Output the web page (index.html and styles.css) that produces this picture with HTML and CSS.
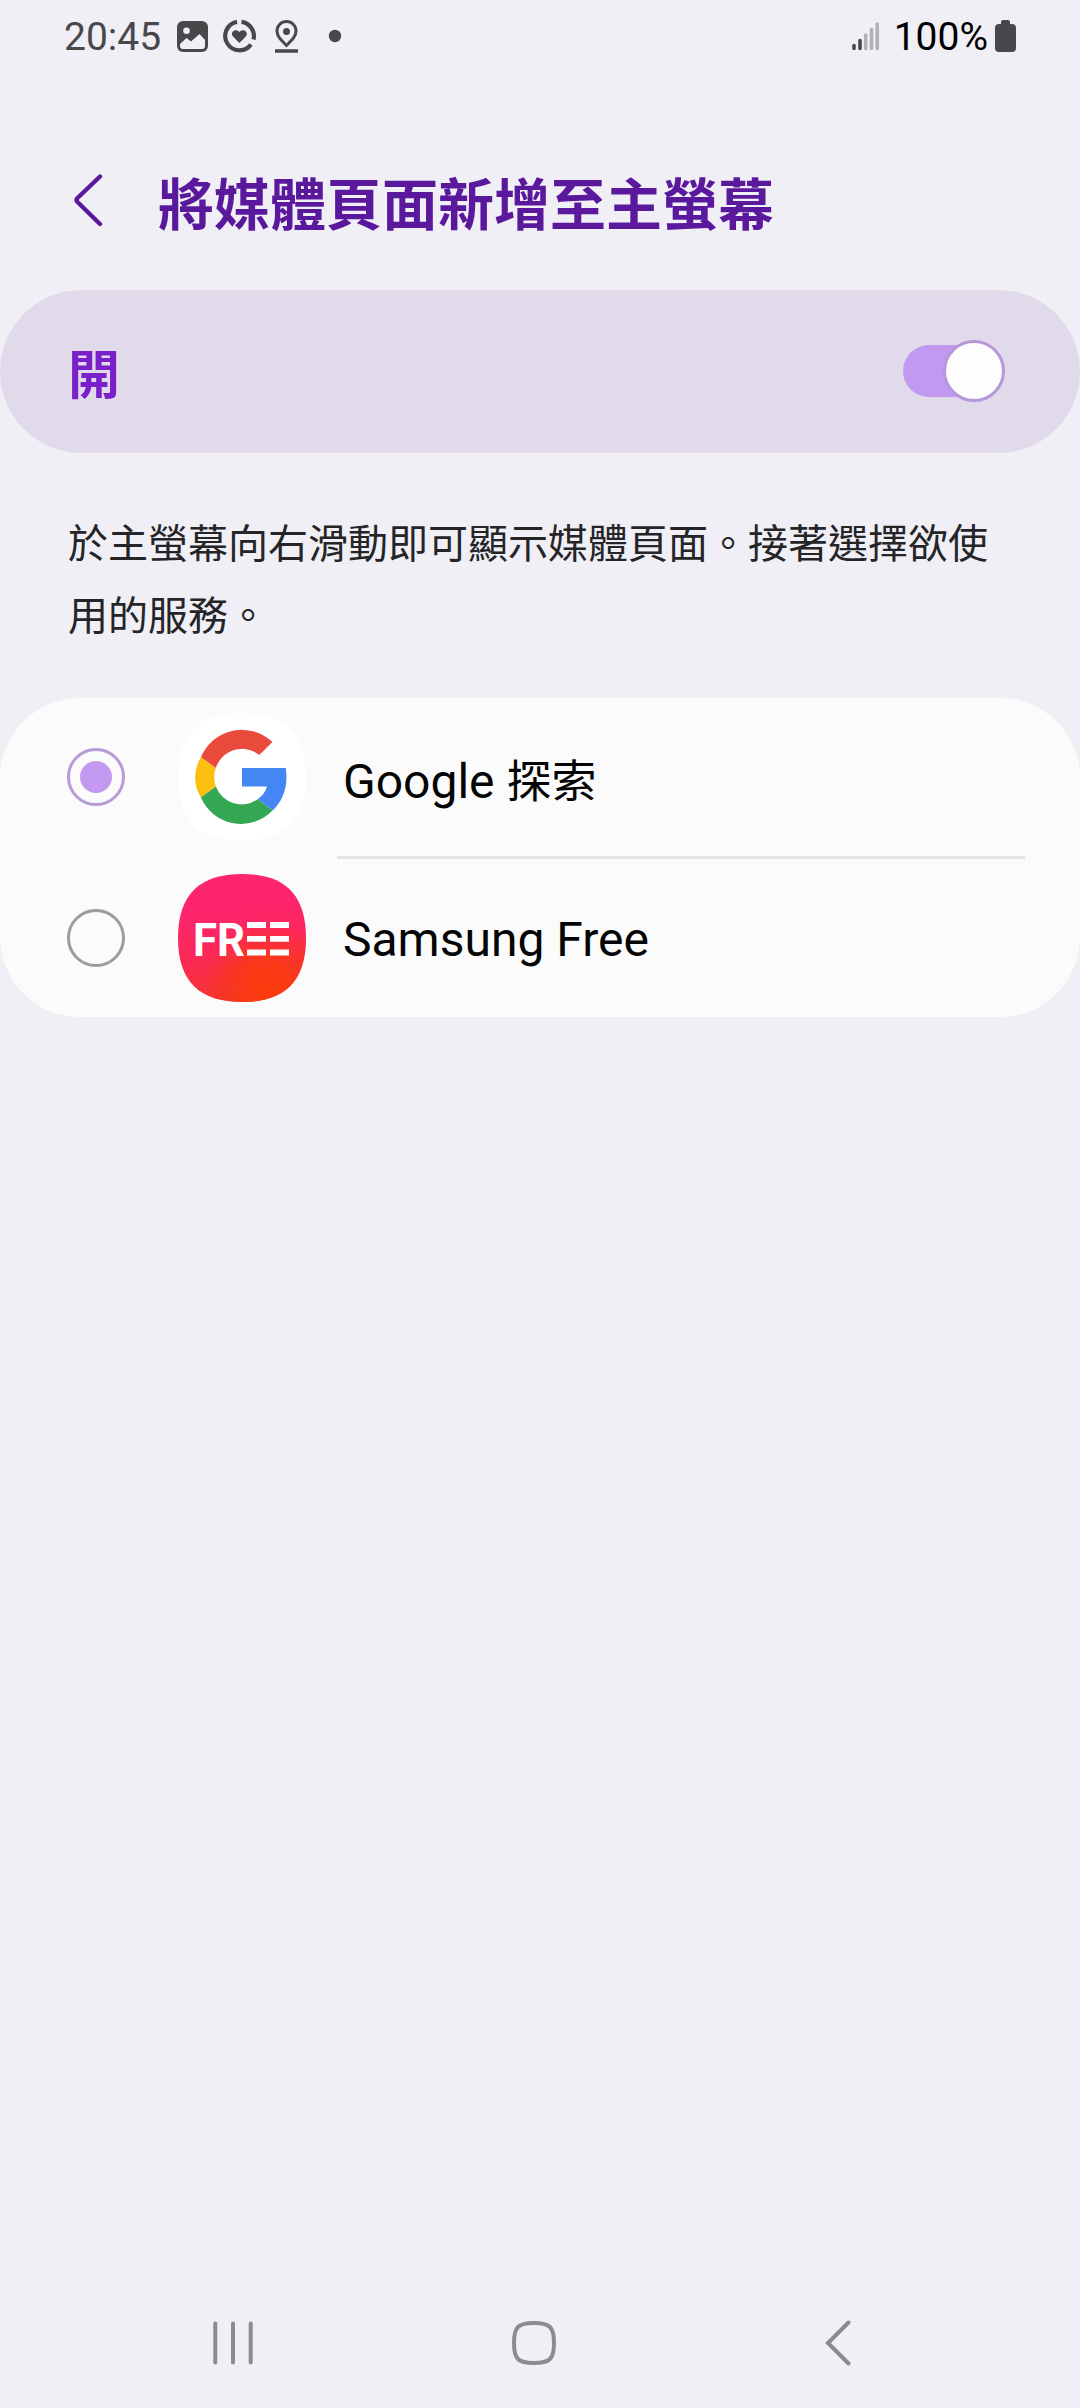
FILE: index.html
```html
<!DOCTYPE html>
<html lang="zh-Hant">
<head>
<meta charset="utf-8">
<title>將媒體頁面新增至主螢幕</title>
<link rel="stylesheet" href="styles.css">
</head>
<body>
<div class="screen">
  <div class="status">
    <span class="clock">20:45</span>
    <svg class="st-icons" width="166" height="36" viewBox="0 0 166 36" fill="none">
      <rect x="1" y="3" width="31" height="31" rx="6" fill="#48484b"/>
      <circle cx="10.500" cy="12.700" r="3.300" fill="#f0eff5"/>
      <path d="M4 26L10.500 20L15 23.500L23.500 16L29 22V28Q29 31 26 31H7Q4 31 4 28Z" fill="#f0eff5"/>
      <g stroke="#48484b" stroke-width="4.200">
        <path d="M61 3.900A14.300 14.300 0 1 0 75 26.500"/>
        <path d="M65.500 3.900A14.300 14.300 0 0 1 77.500 21.500"/>
      </g>
      <path d="M63.400 25L57 18.500C53.500 14 59.500 9.500 63.400 14C67.300 9.500 73.300 14 69.800 18.500Z" fill="#48484b"/>
      <path d="M110.500 27.500C105 22 101 18.500 101 13A9.500 9.500 0 0 1 120 13C120 18.500 116 22 110.500 27.500Z" stroke="#48484b" stroke-width="3"/>
      <circle cx="110.500" cy="13.500" r="3.500" fill="#48484b"/>
      <path d="M99 33H122" stroke="#48484b" stroke-width="3.500"/>
      <circle cx="159" cy="18" r="6.200" fill="#48484b"/>
    </svg>
    <svg class="signal" width="28" height="32" viewBox="0 0 28 32" stroke-width="3.600" stroke-linecap="round">
      <path d="M2 25.500V28.500M8 20.500V28.500" stroke="#48484b"/>
      <path d="M13.700 15V28.500M19.500 9.500V28.500M25.200 4V28.500" stroke="#b2b1b5"/>
    </svg>
    <span class="percent">100%</span>
    <svg width="21" height="32" viewBox="0 0 21 32"><path d="M6 4V2Q6 0 8 0H13Q15 0 15 2V4H17Q21 4 21 8V28Q21 32 17 32H4Q0 32 0 28V8Q0 4 4 4Z" fill="#48484b"/></svg>
  </div>
  <header class="header">
    <svg width="30" height="56" viewBox="0 0 30 56" fill="none"><path d="M26 4.500L3.500 26Q1.500 28 3.500 30L26 52" stroke="#5a189c" stroke-width="4.300" stroke-linecap="round" stroke-linejoin="round"/></svg>
    <h1>將媒體頁面新增至主螢幕</h1>
  </header>
  <section class="master">
    <span class="master-label">開</span>
    <span class="switch"><span class="track"></span><span class="thumb"></span></span>
  </section>
  <p class="desc">於主螢幕向右滑動即可顯示媒體頁面。接著選擇欲使用的服務。</p>
  <section class="card">
    <div class="row">
      <span class="radio on"></span>
      <svg class="app" width="128" height="128" viewBox="0 0 128 128">
        <path d="M64 0C106 0 128 20 128 64S106 128 64 128S0 108 0 64S22 0 64 0Z" fill="#fff"/>
        <g transform="translate(17 17)">
          <path d="M5.900 27.200A44.500 44.500 0 0 1 77.500 12L64.300 25A27.500 27.500 0 0 0 20.800 38Z" fill="#ea4a3c"/>
          <path d="M5.900 27.200A38 38 0 0 0 5.900 67.500L20.800 56.500A28 28 0 0 1 20.800 38Z" fill="#fbbf0f"/>
          <path d="M5.900 67.500A43.700 43.700 0 0 0 77.500 80.500L63 69A27.500 27.500 0 0 1 20.800 56.500Z" fill="#34a753"/>
          <path d="M47 38H90.800C93.500 56 88 71 77.500 80.500L63 69Q70 64 72 56.500H47Z" fill="#4486f3"/>
        </g>
      </svg>
      <span class="name discover">Google <span class="han">探索</span></span>
    </div>
    <div class="divider"></div>
    <div class="row">
      <span class="radio"></span>
      <svg class="app" width="128" height="128" viewBox="0 0 128 128">
        <defs>
          <linearGradient id="pink" x1=".45" y1="0" x2=".6" y2="1"><stop offset=".2" stop-color="#fd2570"/><stop offset=".55" stop-color="#fb2859"/><stop offset="1" stop-color="#f4362c"/></linearGradient>
          <radialGradient id="glow" cx=".7" cy=".87" r=".5"><stop offset="0" stop-color="#fa3b0c"/><stop offset=".35" stop-color="#fa3b0c" stop-opacity=".8"/><stop offset="1" stop-color="#fa3b0c" stop-opacity="0"/></radialGradient>
        </defs>
        <path d="M64 0C106 0 128 20 128 64S106 128 64 128S0 108 0 64S22 0 64 0Z" fill="url(#pink)"/>
        <path d="M64 0C106 0 128 20 128 64S106 128 64 128S0 108 0 64S22 0 64 0Z" fill="url(#glow)"/>
        <text x="15" y="81.500" class="logo" textLength="52" lengthAdjust="spacingAndGlyphs">FR</text>
        <path d="M69 51H88M69 64.800H88M69 78.500H88M92 51H111M92 64.800H111M92 78.500H111" stroke="#fff" stroke-width="5.800"/>
      </svg>
      <span class="name">Samsung Free</span>
    </div>
  </section>
  <nav class="nav">
    <svg width="40" height="44" viewBox="0 0 40 44" stroke="#8c8c90" stroke-width="4" stroke-linecap="round"><path d="M2.300 2.500V41.500M20 2.500V41.500M37.700 2.500V41.500"/></svg>
    <svg class="home" width="44" height="44" viewBox="0 0 44 44" fill="none"><path d="M22 2C38 2 42 6 42 22S38 42 22 42S2 38 2 22S6 2 22 2Z" stroke="#8c8c90" stroke-width="4"/></svg>
    <svg width="26" height="46" viewBox="0 0 26 46" fill="none"><path d="M23.500 2.500L3 23L23.500 43.500" stroke="#8c8c90" stroke-width="4" stroke-linecap="round"/></svg>
  </nav>
</div>
</body>
</html>
```
FILE: styles.css
```css
* { box-sizing: border-box; }
body {
  margin: 0;
  background: #f0eff5;
  font-family: Roboto, "Noto Sans CJK TC", sans-serif;
}
svg { display: block; flex: none; }
.screen {
  display: flex;
  flex-direction: column;
  width: 1080px;
  height: 2408px;
}
.status {
  display: flex;
  align-items: center;
  height: 72px;
  padding: 0 64px 0 64px;
  font-size: 39px;
  line-height: 46px;
}
.clock { width: 112px; color: #48484b; white-space: nowrap; }
.clock, .percent { padding-top: 1px; }
.signal { margin-left: auto; }
.percent { margin: 0 7px 0 14px; color: #000; }
.header {
  display: flex;
  align-items: flex-start;
  height: 218px;
  padding: 92px 0 0 74px;
  gap: 54px;
}
.header svg { margin-top: 8px; }
.header h1 {
  margin: 2px 0 0;
  color: #5a189c;
  font-size: 56px;
  line-height: 80px;
  font-weight: 700;
}
.master {
  display: flex;
  align-items: center;
  justify-content: space-between;
  height: 163px;
  padding: 0 75px 0 68px;
  border-radius: 82px;
  background: #e1daeb;
}
.master-label {
  color: #7920cb;
  font-size: 52px;
  line-height: 76px;
  font-weight: 700;
  padding-top: 10px;
}
.switch { display: grid; align-items: center; width: 102px; height: 62px; margin-bottom: 1px; }
.switch > * { grid-area: 1 / 1; }
.track { width: 84px; height: 52px; border-radius: 26px; background: #c299f0; }
.thumb {
  justify-self: end;
  width: 62px;
  height: 62px;
  border: 3px solid #b697d9;
  border-radius: 50%;
  background: #fdfdfd;
}
.desc {
  margin: 0;
  height: 245px;
  padding: 56px 70px 0 68px;
  color: #252528;
  font-size: 40px;
  line-height: 72px;
}
.card {
  height: 319px;
  border-radius: 80px;
  background: #fbfbfb;
}
.row { display: flex; align-items: center; height: 158px; padding-left: 67px; }
.radio {
  display: grid;
  place-items: center;
  width: 58px;
  height: 58px;
  border: 3px solid #9c9c9c;
  border-radius: 50%;
}
.radio.on { border-color: #b69bd6; }
.radio.on::after {
  content: "";
  width: 32px;
  height: 32px;
  border-radius: 50%;
  background: #c299f0;
}
.app { margin-left: 53px; }
.name { margin-left: 37px; padding-top: 3px; color: #050505; font-size: 48px; line-height: 60px; white-space: nowrap; }
.discover { padding-top: 11px; }
.han { font-size: 45px; }
.divider { height: 3px; margin: 0 55px 0 337px; background: #e5e5e6; }
.logo { font: 700 46px Roboto, sans-serif; fill: #fff; }
.nav {
  display: flex;
  align-items: center;
  justify-content: space-between;
  height: 130px;
  margin-top: auto;
  padding: 0 229px 0 213px;
}
.home { margin-right: 10px; }
```
